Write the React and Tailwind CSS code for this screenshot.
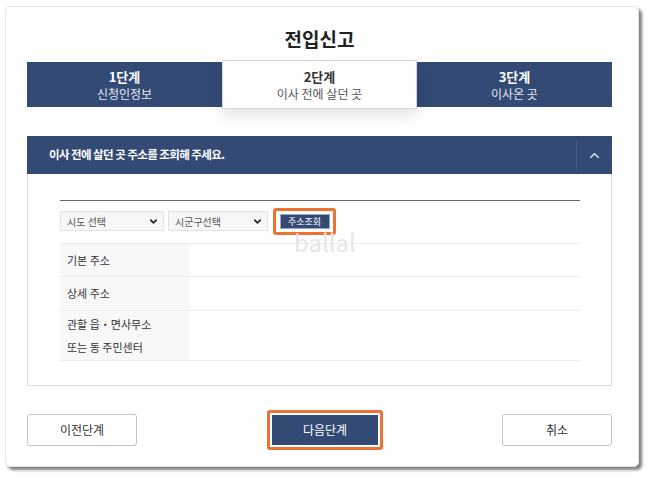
import { ChevronUp, ChevronDown } from "lucide-react";

const font = { fontFamily: '"Noto Sans CJK KR", "Noto Sans", sans-serif' };

const Tab = ({ step, label, active }) => (
    <div
        className={
            active
                ? "w-[195px] h-[49px] bg-white border border-[#d4d8df] shadow-[0_8px_14px_rgba(0,0,0,0.10)] flex flex-col items-center justify-center z-10"
                : "w-[195px] h-[45px] bg-[#334a75] flex flex-col items-center justify-center"
        }>
        <p className={`text-[13px] font-bold leading-[17px] ${active ? "text-[#333]" : "text-white"}`}>{step}</p>
        <p className={`text-[12px] leading-[17px] ${active ? "text-[#555]" : "text-[#e4e8f0]"}`}>{label}</p>
    </div>
);

const SelectBox = ({ label, width }) => (
    <div className={`${width} h-[20px] bg-[#f7f7f7] border border-[#e2e2e2] flex items-center justify-between pl-[6px] pr-[4px]`}>
        <span className="text-[10px] text-[#555]">{label}</span>
        <ChevronDown size={11} strokeWidth={3.5} className="text-[#222]" />
    </div>
);

const Row = ({ children, height }) => (
    <div className={`flex border-b border-[#ececec] ${height}`}>
        <div className="w-[130px] bg-[#f8f8f8] flex flex-col justify-center pl-[7px] text-[11px] text-[#333] leading-[23px]">
            {children}
        </div>
        <div className="flex-1 bg-white"></div>
    </div>
);

const App = () => {
    return (
        <div className="w-[650px] h-[478px] bg-white pt-[6px] pl-[5px]" style={font}>
            <div className="w-[634px] h-[461px] bg-white border border-[#e6e6e6] rounded-[5px] shadow-[3px_3px_3px_rgba(0,0,0,0.5)] pl-[21px] pr-[26px] pt-[18px]">
                {/* title */}
                <h1 className="text-center text-[19px] font-bold text-[#222] leading-[28px] mb-[7px]">전입신고</h1>

                {/* steps */}
                <div className="flex items-center h-[49px]">
                    <Tab step="1단계" label="신청인정보" />
                    <Tab step="2단계" label="이사 전에 살던 곳" active />
                    <Tab step="3단계" label="이사온 곳" />
                </div>

                {/* accordion */}
                <div className="mt-[27px]">
                    <div className="h-[38px] bg-[#334a75] flex items-center">
                        <p className="flex-1 pl-[22px] text-[11.5px] font-bold text-white tracking-[-0.05em]">
                            이사 전에 살던 곳 주소를 조회해 주세요.
                        </p>
                        <div className="w-[36px] h-[30px] border-l border-[#46598a] flex items-center justify-center">
                            <ChevronUp size={15} strokeWidth={2.2} className="text-white" />
                        </div>
                    </div>
                    <div className="relative h-[212px] border border-t-0 border-[#dcdcdc] pl-[32px] pr-[31px] pt-[26px]">
                        <div className="h-px bg-[#666]"></div>
                        <div className="flex items-center gap-[4px] mt-[10px] h-[20px]">
                            <SelectBox label="시도 선택" width="w-[104px]" />
                            <SelectBox label="시군구선택" width="w-[100px]" />
                            <div className="ml-[1px] w-[63px] h-[27px] border-[3px] border-[#f07233] rounded-[3px] flex items-center justify-center">
                                <div className="w-[50px] h-[15px] bg-[#334a75] border border-[#9aa6bf] flex items-center justify-center text-[9px] text-white leading-none">
                                    주소조회
                                </div>
                            </div>
                        </div>
                        <div className="mt-[12px] border-t border-[#ececec]">
                            <Row height="h-[33px]">기본 주소</Row>
                            <Row height="h-[34px]">상세 주소</Row>
                            <Row height="h-[50px]">
                                <span>관할 읍・면사무소</span>
                                <span>또는 동 주민센터</span>
                            </Row>
                        </div>
                        <span className="absolute left-[266px] top-[56px] text-[24px] leading-none text-[#e6e6e6] pointer-events-none">ballal</span>
                    </div>
                </div>

                {/* buttons */}
                <div className="flex items-center mt-[24px] h-[40px]">
                    <button className="w-[110px] h-[32px] bg-white border border-[#c4c4c4] rounded-[3px] text-[12px] text-[#333]">
                        이전단계
                    </button>
                    <div className="ml-[130px] w-[116px] h-[40px] border-[3px] border-[#f07233] rounded-[3px] p-[2px]">
                        <button className="w-full h-full bg-[#334a75] text-[12px] text-white">다음단계</button>
                    </div>
                    <button className="ml-auto w-[110px] h-[32px] bg-white border border-[#c4c4c4] rounded-[3px] text-[12px] text-[#333]">
                        취소
                    </button>
                </div>
            </div>
        </div>
    );
};

export default App;
